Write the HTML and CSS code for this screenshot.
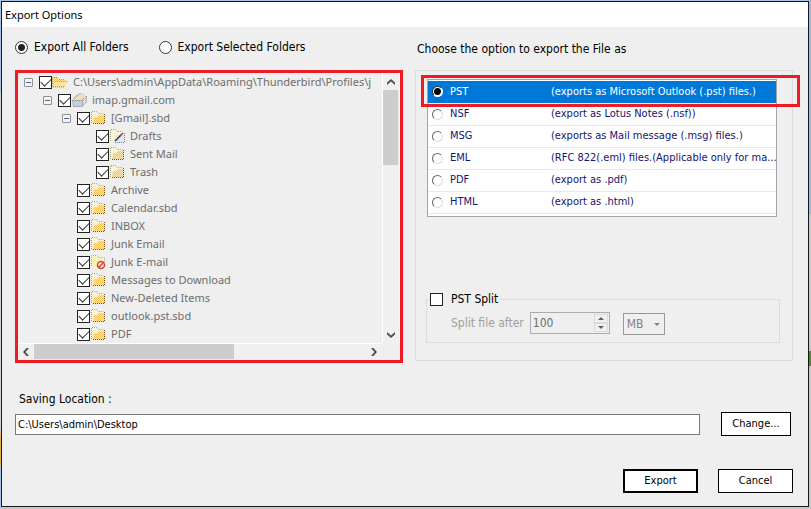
FILE: index.html
```html
<!DOCTYPE html>
<html lang="en">
<head>
    <meta charset="UTF-8">
    <meta name="viewport" content="width=device-width, initial-scale=1.0">
    <title>Export Options</title>
    <link rel="stylesheet" href="styles.css">
</head>
<body>
    <svg class="sprites" aria-hidden="true">
        <defs>
            <pattern id="dither" width="2" height="2" patternUnits="userSpaceOnUse">
                <rect width="2" height="2" fill="#fbe7b4"/>
                <rect width="1" height="1" fill="#f3bf52"/>
                <rect x="1" y="1" width="1" height="1" fill="#f3c768"/>
            </pattern>
            <pattern id="ditherGrey" width="2" height="2" patternUnits="userSpaceOnUse">
                <rect width="2" height="2" fill="#f4f2ee"/>
                <rect width="1" height="1" fill="#b9b4aa"/>
                <rect x="1" y="1" width="1" height="1" fill="#d3d0c8"/>
            </pattern>
            <symbol id="folder" viewBox="0 0 16 16">
                <path d="M1 2h5l2 2h6v10H2z" fill="#fbf3d8"/>
                <path d="M1.5 13V1.5h5l2 2h5" fill="none" stroke="#a9a18a" stroke-dasharray="1 1"/>
                <path d="M4 7h3l2-2h6v8H3z" fill="url(#dither)"/>
                <path d="M3 13.5h12M14.5 4v10" stroke="#6b4c10" stroke-dasharray="1 1"/>
            </symbol>
            <symbol id="folder-open" viewBox="0 0 16 16">
                <path d="M0 3h5l2 2h6v9H1z" fill="url(#dither)"/>
                <path d="M3 7h13l-3 6H1z" fill="#fbe3a4"/>
                <path d="M3 7.5h13M1 12.5h12M.5 3v9M0 3.5h5M7 5.5h6" stroke="#dc9a2c" stroke-dasharray="1 1"/>
            </symbol>
            <symbol id="mailbox" viewBox="0 0 16 16">
                <path d="M1 7l6-5 6-1 2 4v6l-5 4H2z" fill="url(#ditherGrey)"/>
                <path d="M5 5l7-2 1 3-7 2z" fill="#f7dfa6"/>
                <path d="M2 9h9v5H3z" fill="#c5cce8"/>
                <path d="M1.5 8.5h10v6h-9zM11.5 8l4-4v6l-4 4M3 6l7-5" fill="none" stroke="#7c7c8c" stroke-dasharray="1 1"/>
            </symbol>
            <symbol id="drafts" viewBox="0 0 16 16">
                <path d="M1 2h5l2 2h5v9H2z" fill="#fbf3d8"/>
                <path d="M1.5 13V1.5h5l2 2h5" fill="none" stroke="#a9a18a" stroke-dasharray="1 1"/>
                <path d="M6 7h9v8H6z" fill="#dce8f6"/>
                <path d="M6 14.5h9.5V5" fill="none" stroke="#6a87a8" stroke-dasharray="1 1"/>
                <path d="M6 13l7-7" stroke="#333" stroke-width="1.5"/>
                <path d="M11 8l3-3" stroke="#c8403a" stroke-width="1.5"/>
            </symbol>
            <symbol id="junk" viewBox="0 0 16 16">
                <path d="M1 2h5l2 2h6v8l-8 3-4-3z" fill="#faf3b8"/>
                <path d="M1.5 12V1.5h5l2 2h6V8" fill="none" stroke="#b9a878" stroke-dasharray="1 1"/>
                <circle cx="11" cy="11" r="3.5" fill="#fbe9e2" stroke="#d8402c" stroke-width="1.5"/>
                <path d="M8.5 13.5l5-5" stroke="#d8402c" stroke-width="1.5"/>
            </symbol>
            <symbol id="arrow" viewBox="0 0 8 6">
                <path d="M0 3.5L4 0l4 3.5V6L4 2.5 0 6z" fill="#505050"/>
            </symbol>
        </defs>
    </svg>

    <main class="dialog">
        <h1 class="titlebar">Export Options</h1>

        <form class="content">
            <div class="columns">
                <section class="column">
                    <div class="scope">
                        <label class="scope-option"><input type="radio" class="radio" name="scope" checked>Export All Folders</label>
                        <label class="scope-option"><input type="radio" class="radio" name="scope">Export Selected Folders</label>
                    </div>

                    <div class="tree-box">
                        <ul class="tree" id="tree"></ul>
                        <div class="scrollbar vertical">
                            <button type="button" class="scroll-btn" aria-label="Scroll up"><svg class="arrow up"><use href="#arrow"/></svg></button>
                            <div class="thumb"></div>
                            <button type="button" class="scroll-btn end" aria-label="Scroll down"><svg class="arrow down"><use href="#arrow"/></svg></button>
                        </div>
                        <div class="scrollbar horizontal">
                            <button type="button" class="scroll-btn" aria-label="Scroll left"><svg class="arrow left"><use href="#arrow"/></svg></button>
                            <div class="thumb"></div>
                            <button type="button" class="scroll-btn end" aria-label="Scroll right"><svg class="arrow right"><use href="#arrow"/></svg></button>
                        </div>
                    </div>
                </section>

                <section class="column">
                    <h2 class="choose">Choose the option to export the File as</h2>
                    <div class="format-box">
                        <div class="format-list">
                            <table class="formats">
                                <tbody id="formats"></tbody>
                            </table>
                            <div class="highlight"></div>
                        </div>

                        <fieldset class="split">
                            <legend><label class="split-toggle"><input type="checkbox" class="check">PST Split</label></legend>
                            <div class="split-row">
                                <label for="splitSize">Split file after</label>
                                <div class="spinner">
                                    <input type="text" id="splitSize" value="100" disabled>
                                    <div class="spin-buttons">
                                        <button type="button" class="spin" aria-label="Increase" disabled></button>
                                        <button type="button" class="spin spin-down" aria-label="Decrease" disabled></button>
                                    </div>
                                </div>
                                <div class="unit">
                                    <select aria-label="Unit" disabled>
                                        <option>MB</option>
                                        <option>GB</option>
                                    </select>
                                </div>
                            </div>
                        </fieldset>
                    </div>
                </section>
            </div>

            <div class="location">
                <label for="path">Saving Location :</label>
                <div class="location-row">
                    <input type="text" id="path" class="path" value="C:\Users\admin\Desktop">
                    <button type="button" class="btn btn-change">Change...</button>
                </div>
            </div>

            <div class="actions">
                <button type="submit" class="btn btn-default">Export</button>
                <button type="button" class="btn">Cancel</button>
            </div>
        </form>
    </main>

    <script src="script.js"></script>
</body>
</html>
```

FILE: styles.css
```css
* {
    margin: 0;
    padding: 0;
    box-sizing: border-box;
}

body {
    font-family: 'DejaVu Sans Condensed', 'DejaVu Sans', sans-serif;
    font-size: 12px;
    line-height: 16px;
    color: #000;
    min-height: 100vh;
    display: flex;
    padding: 1px 2px 2px 1px;
    background:
        linear-gradient(to bottom, #9db9dc 42%, #c8c8c8 42%, #c8c8c8 69%, #4f8a2c 69%, #4f8a2c 72%, #c8c8c8 72%) right / 2px 100% no-repeat,
        linear-gradient(to bottom, #a9c4e4 18%, #d4d4d4 18%, #d4d4d4 84%, #e0b050 86%, #e0b050 91%, #a9c4e4 92%) left / 1px 100% no-repeat,
        linear-gradient(to bottom, #a9c4e4 50%, #c8c8c8 50%);
}

button,
input,
select {
    font: inherit;
    color: inherit;
}

.sprites {
    position: absolute;
    width: 0;
    height: 0;
}

.dialog {
    flex: 1;
    min-width: 0;
    display: flex;
    flex-direction: column;
    background: #efefef;
    border: 1px solid #14181c;
}

.titlebar {
    font-family: 'Noto Sans', sans-serif;
    font-size: 11px;
    font-weight: normal;
    line-height: 25px;
    padding-left: 3px;
    background: #fff;
}

.content {
    flex: 1;
    display: flex;
    flex-direction: column;
    padding: 12px 15px 13px 13px;
}

.columns {
    display: grid;
    grid-template-columns: 388fr 378fr;
    gap: 12px;
}

.column {
    display: flex;
    flex-direction: column;
    gap: 15px;
    min-width: 0;
}

.scope {
    display: flex;
    gap: 30px;
}

.scope-option {
    display: flex;
    align-items: center;
    gap: 6px;
}

.choose {
    font-size: 12px;
    font-weight: normal;
    line-height: 16px;
    padding: 2px 0 0 2px;
    margin-bottom: -2px;
}

/* radios and check boxes */
.radio {
    appearance: none;
    width: 13px;
    height: 13px;
    border: 1px solid #333;
    border-radius: 50%;
    background: #fff;
}

.radio:checked {
    background: radial-gradient(circle, #222 3px, #fff 4px);
}

.check {
    appearance: none;
    flex: none;
    width: 13px;
    height: 13px;
    border: 1px solid #222;
    background: #fff;
    display: grid;
    place-items: center;
}

.check:checked::before {
    content: "";
    width: 9px;
    height: 5px;
    margin-bottom: 3px;
    border: solid #333;
    border-width: 0 0 1px 1px;
    transform: rotate(-45deg);
}

/* folder tree */
.tree-box {
    height: 293px;
    display: grid;
    grid-template: 1fr 17px / 1fr 18px;
    border: 3px solid #ed1c24;
}

.tree {
    list-style: none;
    padding: 0 0 0 6px;
    overflow: hidden;
    font-family: 'Noto Sans', sans-serif;
    font-size: 11px;
    color: #6d6d6d;
}

.tree li {
    display: flex;
    align-items: center;
    height: 18px;
    white-space: nowrap;
}

.tree label {
    display: flex;
    align-items: center;
}

.level-1 {
    padding-left: 19px;
}

.level-2 {
    padding-left: 38px;
}

.level-3 {
    padding-left: 57px;
}

.toggle {
    flex: none;
    width: 9px;
    height: 9px;
    margin-right: 6px;
    border: 1px solid #919191;
    border-radius: 1px;
    background: linear-gradient(#4b63a7, #4b63a7) center / 5px 1px no-repeat #f4f4f4;
}

.toggle-space {
    flex: none;
    width: 15px;
}

.icon {
    flex: none;
    width: 16px;
    height: 16px;
    margin-right: 5px;
}

.scrollbar {
    display: flex;
    background: #f0f0f0;
}

.vertical {
    flex-direction: column;
    border-left: 1px solid #fff;
    border-right: 1px solid #fff;
}

.horizontal {
    border-top: 1px solid #fff;
}

.scroll-btn {
    display: grid;
    place-items: center;
    flex: none;
    width: 16px;
    height: 17px;
    border: none;
    background: none;
}

.horizontal .scroll-btn {
    height: 15px;
}

.vertical .scroll-btn {
    width: 15px;
}

.scroll-btn.end {
    margin: auto 0 0 auto;
}

.vertical .scroll-btn.end {
    margin-left: 0;
}

.horizontal .scroll-btn.end {
    margin-top: 0;
}

.thumb {
    background: #cdcdcd;
}

.vertical .thumb {
    width: 15px;
    height: 75px;
}

.horizontal .thumb {
    width: 55%;
    height: 15px;
}

.arrow {
    width: 8px;
    height: 6px;
}

.down {
    transform: rotate(180deg);
}

.left {
    transform: rotate(-90deg);
}

.right {
    transform: rotate(90deg);
}

/* export formats */
.format-box {
    height: 291px;
    display: flex;
    flex-direction: column;
    justify-content: space-between;
    padding: 8px 12px 17px 10px;
    border: 1px solid #dcdcdc;
}

.format-list {
    position: relative;
    margin: 0 3px 0 1px;
    padding: 1px 0 2px;
    border: 1px solid #a0a4ac;
    background: #fff;
}

.formats {
    width: 100%;
    table-layout: fixed;
    border-collapse: collapse;
    color: #14146e;
    font-size: 11px;
}

.formats td {
    height: 22px;
    border-bottom: 1px solid #e1eafa;
    white-space: nowrap;
}

.formats .name {
    width: 123px;
}

.formats label {
    display: flex;
    align-items: center;
    gap: 7px;
    padding-left: 4px;
}

.formats .radio {
    width: 11px;
    height: 11px;
    border-color: #666 #ddd #ddd #666;
}

.formats .radio:checked {
    border-color: #333 #fff #fff #333;
    background: radial-gradient(circle, #000 3px, #fff 4px);
}

.formats .selected {
    background: #0078d7;
    color: #fff;
}

.highlight {
    position: absolute;
    top: -5px;
    left: -7px;
    right: -24px;
    height: 32px;
    border: 3px solid #ed1c24;
    pointer-events: none;
}

.split {
    height: 52px;
    padding: 0 0 0 24px;
    border: 1px solid #dcdcdc;
}

.split legend {
    margin-left: -21px;
    padding-right: 3px;
}

.split-toggle {
    display: flex;
    align-items: center;
    gap: 8px;
}

.split-row {
    display: flex;
    align-items: center;
    gap: 6px;
    margin-top: 4px;
    color: #a0a0a0;
}

.spinner {
    display: flex;
    width: 80px;
    height: 22px;
    padding: 1px;
    border: 1px solid #abadb3;
    color: #6d6d6d;
}

.spinner input {
    flex: 1;
    min-width: 0;
    padding-left: 1px;
    border: none;
    background: none;
}

.spin-buttons {
    display: grid;
    width: 14px;
}

.spin {
    display: grid;
    place-items: center;
    border: 1px solid #dadada;
    background: #f0f0f0;
}

.spin::before {
    content: "";
    border: 3px solid transparent;
    border-top-width: 0;
    border-bottom-color: #606060;
}

.spin-down::before {
    transform: rotate(180deg);
}

.unit {
    display: grid;
    align-items: center;
    margin: 2px 0 0 7px;
}

.unit select {
    grid-area: 1 / 1;
    appearance: none;
    width: 42px;
    height: 22px;
    padding-left: 3px;
    border: 1px solid #999;
    background: #efefef;
    color: #838383;
    opacity: 1;
}

.unit::after {
    content: "";
    grid-area: 1 / 1;
    justify-self: end;
    margin-right: 5px;
    border: 3px solid transparent;
    border-bottom-width: 0;
    border-top-color: #838383;
}

/* saving location and buttons */
.location {
    display: flex;
    flex-direction: column;
    gap: 5px;
    margin-top: 28px;
}

.location label {
    padding-left: 4px;
}

.location-row {
    display: flex;
    align-items: center;
    gap: 21px;
    padding-right: 2px;
}

.path {
    flex: 1;
    min-width: 0;
    height: 21px;
    padding: 0 2px;
    border: 1px solid #7a7a7a;
    background: #fff;
    font-size: 11px;
}

.btn {
    width: 75px;
    height: 24px;
    border: 1px solid #000;
    background: #fff;
    font-size: 11px;
}

.btn-change {
    width: 70px;
}

.btn-default {
    border-width: 2px;
}

.actions {
    display: flex;
    justify-content: flex-end;
    gap: 20px;
    margin-top: auto;
}
```

FILE: script.js
```js
const folders = [
    { name: 'C:\\Users\\admin\\AppData\\Roaming\\Thunderbird\\Profiles\\j', level: 0, icon: 'folder-open', open: true },
    { name: 'imap.gmail.com', level: 1, icon: 'mailbox', open: true },
    { name: '[Gmail].sbd', level: 2, icon: 'folder', open: true },
    { name: 'Drafts', level: 3, icon: 'drafts' },
    { name: 'Sent Mail', level: 3, icon: 'folder' },
    { name: 'Trash', level: 3, icon: 'folder' },
    { name: 'Archive', level: 2, icon: 'folder' },
    { name: 'Calendar.sbd', level: 2, icon: 'folder' },
    { name: 'INBOX', level: 2, icon: 'folder' },
    { name: 'Junk Email', level: 2, icon: 'folder' },
    { name: 'Junk E-mail', level: 2, icon: 'junk' },
    { name: 'Messages to Download', level: 2, icon: 'folder' },
    { name: 'New-Deleted Items', level: 2, icon: 'folder' },
    { name: 'outlook.pst.sbd', level: 2, icon: 'folder' },
    { name: 'PDF', level: 2, icon: 'folder' }
];

const formats = [
    ['PST', '(exports as Microsoft Outlook (.pst) files.)'],
    ['NSF', '(export as Lotus Notes (.nsf))'],
    ['MSG', '(exports as Mail message (.msg) files.)'],
    ['EML', '(RFC 822(.eml) files.(Applicable only for ma...'],
    ['PDF', '(export as .pdf)'],
    ['HTML', '(export as .html)']
];

document.getElementById('tree').innerHTML = folders.map(f => `
    <li class="level-${f.level}">
        ${f.open ? '<button type="button" class="toggle" aria-label="Collapse"></button>' : '<span class="toggle-space"></span>'}
        <label><input type="checkbox" class="check" checked><svg class="icon"><use href="#${f.icon}"/></svg>${f.name}</label>
    </li>`).join('');

document.getElementById('formats').innerHTML = formats.map(([name, text], i) => `
    <tr class="${i === 0 ? 'selected' : ''}">
        <td class="name"><label><input type="radio" class="radio" name="format" ${i === 0 ? 'checked' : ''}>${name}</label></td>
        <td>${text}</td>
    </tr>`).join('');

// Move the selected row together with its radio
document.getElementById('formats').addEventListener('change', function(e) {
    this.querySelectorAll('tr').forEach(row => row.classList.remove('selected'));
    e.target.closest('tr').classList.add('selected');
});
```
